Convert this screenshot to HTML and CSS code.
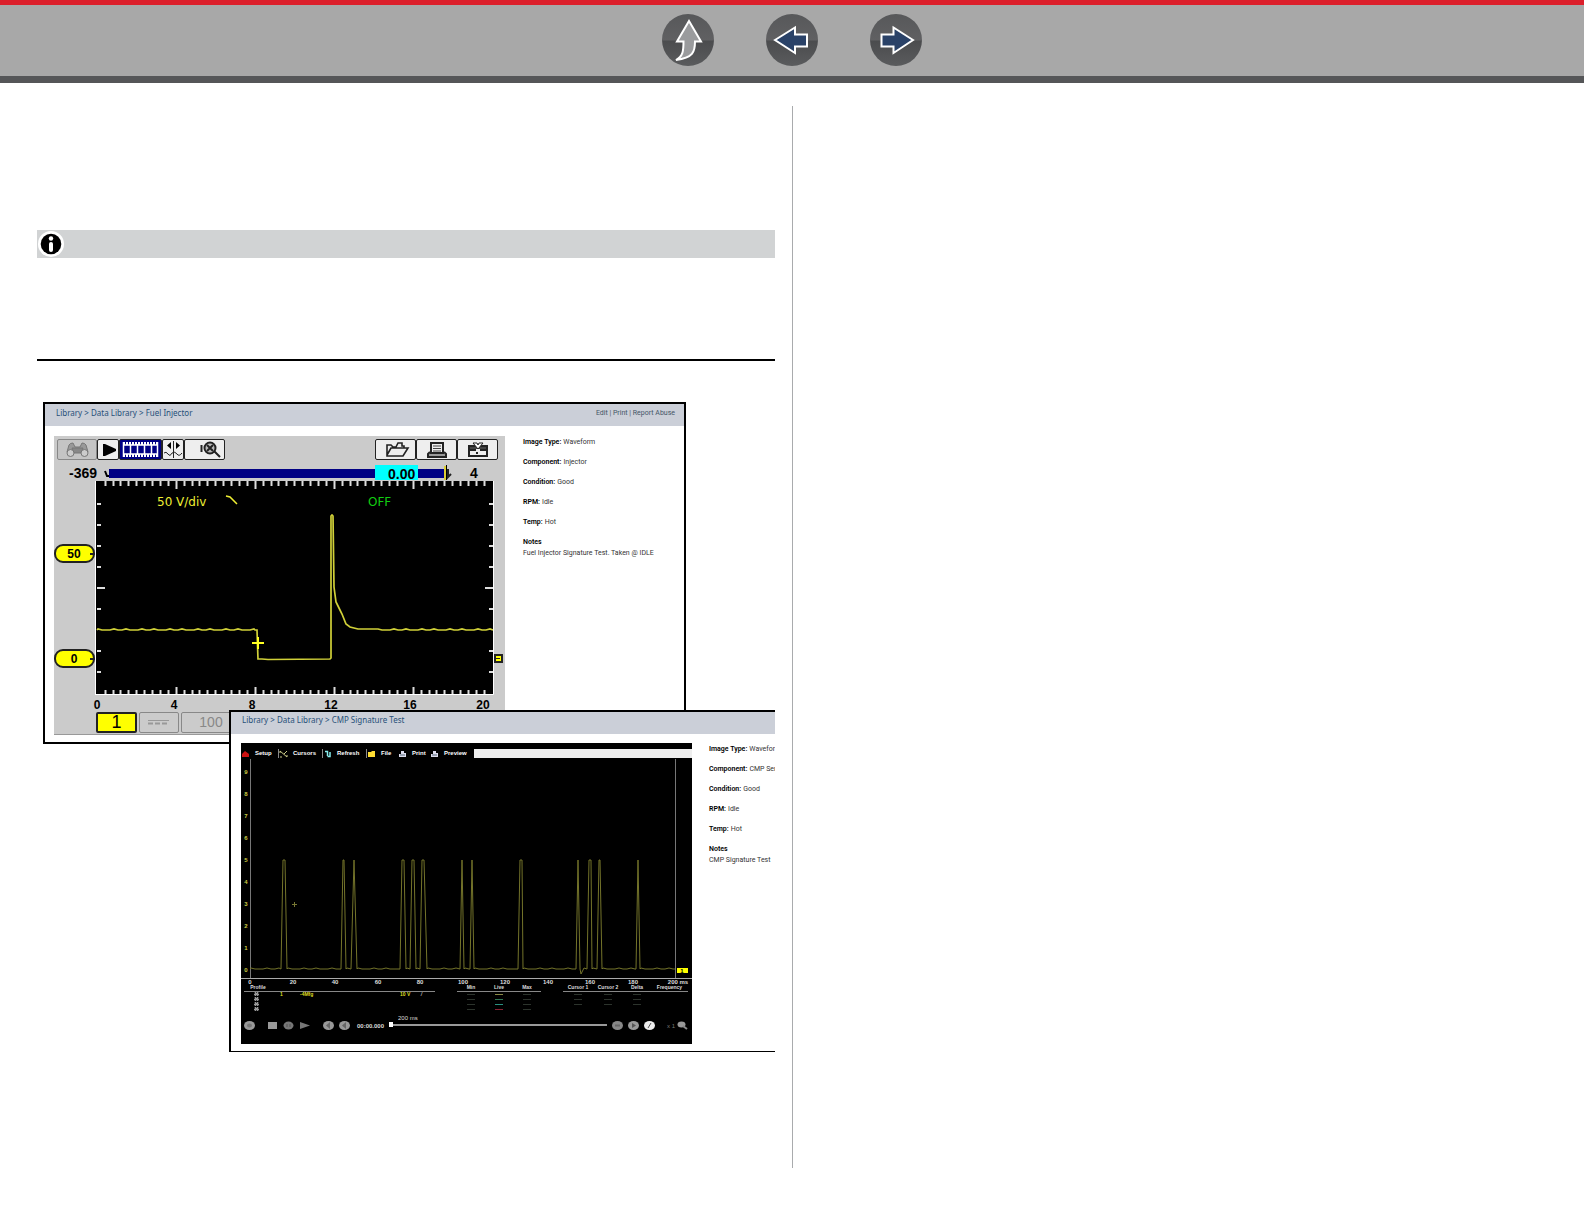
FILE: index.html
```html
<!DOCTYPE html>
<html lang="en">
<head>
<meta charset="utf-8">
<meta name="viewport" content="width=device-width, initial-scale=1">
<title>Data Library</title>
<link rel="stylesheet" href="styles.css">
</head>
<body>
<header class="topbar">
  <nav class="pager" aria-label="Document">
    <button class="round" type="button" aria-label="Back to contents">
      <svg viewBox="0 0 52 52"><path class="arrow-up" d="M27 7 39 27.500H33C33 38 31 44 14 46C21 42 21.500 37 21.500 27.500H15Z"/></svg>
    </button>
    <button class="round" type="button" aria-label="Previous page">
      <svg viewBox="0 0 52 52"><path class="arrow-side" d="M9 26 29 13.500V20.500H41V32.500H29V39Z"/></svg>
    </button>
    <button class="round" type="button" aria-label="Next page">
      <svg viewBox="0 0 52 52"><path class="arrow-side" d="M43 26 23.500 13.500V20.500H11.500V32.500H23.500V39Z"/></svg>
    </button>
  </nav>
</header>

<main class="page">
  <section class="column first">
    <div class="note">
      <div class="note-bar">
        <svg class="note-icon" viewBox="0 0 28 28" aria-label="Note"><circle cx="14" cy="14" r="13" fill="#fff"/><circle cx="14" cy="14" r="10.300"/><circle cx="14" cy="8.500" r="2.200" fill="#fff"/><rect x="12" y="12" width="4" height="10" rx="2" fill="#fff"/></svg>
      </div>
    </div>

    <div class="figure">
      <article class="window">
        <header class="window-bar">
          <span class="crumbs">Library &gt; Data Library &gt; Fuel Injector</span>
          <span class="actions"><a href="#edit">Edit</a> | <a href="#print">Print</a> | <a href="#report">Report Abuse</a></span>
        </header>
        <div class="window-body">
          <div class="scope">
            <div class="tools">
              <button class="tool wide off" type="button" aria-label="Find"><svg viewBox="0 0 38 19"><g fill="#999" stroke="#777"><path d="M11 5Q12 3 15 3L17 7H22L24 3Q27 3 28 5L30 12H9Z"/><path d="M14 8H25L23 13H16Z" fill="#888"/><circle cx="12.500" cy="13" r="3.500" fill="#ccc"/><circle cx="26.500" cy="13" r="3.500" fill="#ccc"/></g></svg></button>
              <button class="tool" type="button" aria-label="Play"><svg viewBox="0 0 20 19"><path d="M5 4H7L18 9V11L7 16H5Z"/></svg></button>
              <button class="tool film" type="button" aria-label="Frames"><svg viewBox="0 0 41 19"><path d="M3 3.500H38M3 15.500H38" stroke="#fff" stroke-width="3" stroke-dasharray="2 1"/><path d="M3.500 2V17M10.500 4V15M17.500 4V15M24.500 4V15M31.500 4V15M37.500 2V17M3 5H38M3 14H38" stroke="#fff" stroke-width="1.500" fill="none"/></svg></button>
              <button class="tool" type="button" aria-label="Cursor"><svg viewBox="0 0 20 19"><path d="M10.500 1V18M1 13Q3 11 5 14T9 13Q12 11 14 14T19 13" fill="none" stroke="#222"/><path d="M8 2V9L4 5.500ZM13 2V9L17 5.500Z"/></svg></button>
              <button class="tool wide" type="button" aria-label="Zoom"><svg viewBox="0 0 38 19"><path d="M15.500 5V12" stroke="#222" stroke-width="2"/><circle cx="24" cy="8" r="5.500" fill="#bbb" stroke="#222" stroke-width="2"/><path d="M21 5 27 11M27 5 21 11M28 11 34 17" stroke="#222" stroke-width="2"/></svg></button>
              <span class="push"></span>
              <button class="tool wide" type="button" aria-label="Open"><svg viewBox="0 0 38 19"><path d="M10 15V5H14L16 7H19L21 3H25V6H27V8M10 15 14 8H31L26 16H10Z" fill="none" stroke="#222" stroke-width="1.600"/></svg></button>
              <button class="tool wide" type="button" aria-label="Print"><svg viewBox="0 0 38 19"><path d="M13 3H25V13H13ZM12 12 10 14V17H28V14L26 12" fill="none" stroke="#222" stroke-width="2"/><path d="M15 6H23M15 8.500H23M15 11H23M11 15H27" stroke="#444"/></svg></button>
              <button class="tool wide" type="button" aria-label="Tools"><svg viewBox="0 0 38 19"><path d="M10 6H28V16H10ZM10 10H17M21 10H28" fill="none" stroke="#222" stroke-width="2"/><path d="M11 7H27V9H11Z" fill="#444"/><path d="M14 3 19 9 24 3 20 3 19 5 18 3Z" fill="#fff" stroke="#222"/><path d="M18 12V14" stroke="#222" stroke-width="2"/></svg></button>
            </div>
            <svg class="trace" id="trace-one" viewBox="54 461 451 250" role="img" aria-label="Fuel injector waveform"></svg>
            <div class="channels">
              <button class="channel on" type="button">1</button>
              <button class="channel" type="button" aria-label="Coupling"><svg viewBox="0 0 38 19"><path d="M8 7.500H29" stroke="#999"/><path d="M8 10.500H29" stroke="#999" stroke-dasharray="5 2" stroke-width="2"/></svg></button>
              <button class="channel range" type="button">100</button>
            </div>
          </div>
          <dl class="facts">
            <div><dt>Image Type:</dt><dd>Waveform</dd></div>
            <div><dt>Component:</dt><dd>Injector</dd></div>
            <div><dt>Condition:</dt><dd>Good</dd></div>
            <div><dt>RPM:</dt><dd>Idle</dd></div>
            <div><dt>Temp:</dt><dd>Hot</dd></div>
            <div class="notes"><dt>Notes</dt><dd>Fuel Injector Signature Test. Taken @ IDLE</dd></div>
          </dl>
        </div>
      </article>

      <article class="window front">
        <header class="window-bar">
          <span class="crumbs">Library &gt; Data Library &gt; CMP Signature Test</span>
        </header>
        <div class="window-body">
          <div class="lab">
            <div class="menu">
              <button type="button"><svg viewBox="0 0 9 8"><path d="M1 4 4 1 8 4V7H1Z" fill="#c11"/></svg>Setup</button>
              <button type="button" class="ruled"><svg viewBox="0 0 9 8"><path d="M1 1 8 7M8 1 5 4M1 7H3M1 1V3M8 5V7" stroke="#cc8" fill="none"/></svg>Cursors</button>
              <button type="button" class="ruled"><svg viewBox="0 0 9 8"><path d="M2 1.500H4.500V6M4.500 6.500H7V2" stroke="#8ee" stroke-width="1.500" fill="none"/></svg>Refresh</button>
              <button type="button" class="ruled small"><svg viewBox="0 0 9 8"><path d="M1 2H4L5 1H8V7H1Z" fill="#fd3"/></svg>File</button>
              <button type="button" class="small"><svg viewBox="0 0 9 8"><path d="M3 1H6V3H8V7H1V4H3Z" fill="#dde"/><path d="M2 5H7" stroke="#567"/></svg>Print</button>
              <button type="button"><svg viewBox="0 0 9 8"><path d="M3 1H6V3H8V7H1V4H3Z" fill="#dde"/><path d="M2 5H7" stroke="#567"/></svg>Preview</button>
              <span class="blank"></span>
            </div>
            <svg class="trace" id="trace-two" viewBox="241 759 451 225" role="img" aria-label="CMP signature waveform"></svg>
            <table class="readout">
              <colgroup><col class="c28"><col class="c28"><col class="c100"><col class="c35"><col class="c22"><col class="c28"><col class="c28"><col class="c28"><col class="c22"><col class="c30"><col class="c30"><col class="c28"><col></colgroup>
              <thead><tr><th>Profile</th><th></th><th></th><th></th><td></td><th>Min</th><th>Live</th><th>Max</th><td></td><th>Cursor 1</th><th>Cursor 2</th><th>Delta</th><th>Frequency</th></tr></thead>
              <tbody>
                <tr><td><i class="chip"></i></td><td class="lime left">1</td><td class="lime left">-4Mfg</td><td class="lime left">10 V <i class="slope">/</i></td><td></td><td><i class="dim"></i></td><td><i class="y"></i></td><td><i class="dim"></i></td><td></td><td><i class="dim"></i></td><td><i class="dim"></i></td><td><i class="dim"></i></td><td></td></tr>
                <tr><td><i class="chip"></i></td><td></td><td></td><td></td><td></td><td><i class="dim"></i></td><td><i class="g"></i></td><td><i class="dim"></i></td><td></td><td><i class="dim"></i></td><td><i class="dim"></i></td><td><i class="dim"></i></td><td></td></tr>
                <tr><td><i class="chip"></i></td><td></td><td></td><td></td><td></td><td><i class="dim"></i></td><td><i class="c"></i></td><td><i class="dim"></i></td><td></td><td><i class="dim"></i></td><td><i class="dim"></i></td><td><i class="dim"></i></td><td></td></tr>
                <tr><td><i class="chip"></i></td><td></td><td></td><td></td><td></td><td><i class="dim"></i></td><td><i class="r"></i></td><td><i class="dim"></i></td><td></td><td></td><td></td><td></td><td></td></tr>
              </tbody>
            </table>
            <div class="transport">
              <button type="button" aria-label="Record"><svg viewBox="0 0 11 9"><ellipse cx="5.500" cy="4.500" rx="5.500" ry="4.500" fill="#999"/><ellipse cx="5.500" cy="4.500" rx="2.500" ry="2" fill="#777"/></svg></button>
              <button class="stop" type="button" aria-label="Stop"><svg viewBox="0 0 11 9"><path d="M1 1H10V8H1Z" fill="#999"/></svg></button>
              <button type="button" aria-label="Pause"><svg viewBox="0 0 11 9"><ellipse cx="5.500" cy="4.500" rx="5" ry="4" fill="#777"/><path d="M4 3V6M7 3V6" stroke="#555"/></svg></button>
              <button type="button" aria-label="Play"><svg viewBox="0 0 11 9"><path d="M1 1 11 4.500 1 8Z" fill="#777"/></svg></button>
              <button class="back" type="button" aria-label="Step back"><svg viewBox="0 0 11 9"><ellipse cx="5.500" cy="4.500" rx="5.500" ry="4.500" fill="#999"/><path d="M7 1V8L3 4.500Z" fill="#666"/></svg></button>
              <button type="button" aria-label="Step forward"><svg viewBox="0 0 11 9"><ellipse cx="5.500" cy="4.500" rx="5.500" ry="4.500" fill="#999"/><path d="M7 1V8L3 4.500Z" fill="#666"/></svg></button>
              <output class="clock">00:00.000</output>
              <label class="seek"><span>200 ms</span><input type="range" min="0" max="200" value="0"></label>
              <button type="button" aria-label="Mark"><svg viewBox="0 0 11 9"><ellipse cx="5.500" cy="4.500" rx="5.500" ry="4.500" fill="#888"/><path d="M3 4.500H8" stroke="#666" stroke-width="2"/></svg></button>
              <button type="button" aria-label="Next mark"><svg viewBox="0 0 11 9"><ellipse cx="5.500" cy="4.500" rx="5.500" ry="4.500" fill="#999"/><path d="M4 2V7L8 4.500Z" fill="#555"/></svg></button>
              <button type="button" aria-label="Edit mark"><svg viewBox="0 0 11 9"><ellipse cx="5.500" cy="4.500" rx="5.500" ry="4.500" fill="#eee"/><path d="M4 7 7 2" stroke="#555"/></svg></button>
              <span class="scale">x 1</span>
              <button class="lens" type="button" aria-label="Zoom"><svg viewBox="0 0 11 9"><ellipse cx="4.500" cy="3.500" rx="4" ry="3" fill="#999"/><path d="M6 5 10 8" stroke="#888" stroke-width="2"/></svg></button>
            </div>
          </div>
          <dl class="facts">
            <div><dt>Image Type:</dt><dd>Wavefor</dd></div>
            <div><dt>Component:</dt><dd>CMP Ser</dd></div>
            <div><dt>Condition:</dt><dd>Good</dd></div>
            <div><dt>RPM:</dt><dd>Idle</dd></div>
            <div><dt>Temp:</dt><dd>Hot</dd></div>
            <div class="notes"><dt>Notes</dt><dd>CMP Signature Test</dd></div>
          </dl>
        </div>
      </article>
    </div>
  </section>
  <section class="column second"></section>
</main>
<script src="traces.js"></script>
</body>
</html>
```
FILE: styles.css
```css
* { box-sizing: border-box; }
body { margin: 0; background: #fff; font-family: "Open Sans", "Noto Sans", sans-serif; color: #222; }
button { margin: 0; padding: 0; border: 0; background: none; font: inherit; color: inherit; cursor: pointer; }
svg { display: block; }

.topbar { height: 83px; border-top: 5px solid #dc1f2b; border-bottom: 7px solid #555658; background: #a8a8a8; }
.pager { display: flex; justify-content: center; gap: 52px; padding-top: 9px; }
.round { width: 52px; height: 52px; border-radius: 50%; background: linear-gradient(#57585a, #606062 50%, #4b4c4e 52%, #5a5b5d); }
.arrow-up { fill: #9a9b9d; stroke: #fff; stroke-width: 2; }
.arrow-side { fill: #2a4268; stroke: #fff; stroke-width: 2; }

.page { display: grid; grid-template-columns: 1fr 1fr; min-height: calc(100vh - 83px); padding: 23px 0 56px; }
.first { min-width: 0; padding: 124px 17px 0 37px; }
.second { border-left: 1px solid #a9abad; }
.note { height: 131px; border-bottom: 2px solid #000; }
.note-bar { background: #d1d3d4; }
.note-icon { width: 28px; height: 28px; }

.figure { position: relative; height: 650px; margin-top: 41px; overflow: hidden; }
.window { width: 643px; margin-left: 6px; border: 2px solid #000; background: #fff; }
.window.front { position: absolute; left: 192px; top: 308px; margin: 0; border-bottom-width: 1px; }
.window-bar { display: flex; justify-content: space-between; height: 22px; padding: 0 9px 0 11px; background: #cbcfd8; line-height: 18px; }
.crumbs { font-family: "Noto Sans", sans-serif; font-size: 8px; color: #274f78; }
.front .crumbs { line-height: 16px; }
.actions { font-family: Roboto, sans-serif; font-size: 7px; color: #456; }
.actions a { color: inherit; text-decoration: none; }
.window-body { display: flex; gap: 18px; padding: 10px 0 7px 9px; }
.front .window-body { gap: 17px; padding: 9px 0 7px 10px; }
.facts { margin: 0; padding-top: 1px; font-family: Roboto, sans-serif; font-size: 7px; line-height: 11px; color: #333; white-space: nowrap; }
.facts div { display: flex; gap: 2px; height: 20px; }
.facts dt { font-weight: 600; color: #000; }
.facts dd { margin: 0; }
.facts .notes { display: block; }

.scope { flex: none; width: 451px; height: 299px; padding-top: 3px; background: #cbcbcb; border-bottom: 1px solid #999; }
.tools { display: flex; padding: 0 7px 0 3px; height: 22px; }
.tool { width: 22px; height: 21px; border: 1px solid #222; border-radius: 2px; background: #eee; }
.tool svg { height: 19px; margin: auto; }
.tool.wide { width: 41px; }
.tool.wide.off { width: 40px; border-color: #888; background: #c4c4c4; }
.tool.film { width: 43px; background: #000084; }
.push { flex: 1; }
.trace { width: 451px; }
.channels { display: flex; gap: 2px; padding: 1px 0 0 42px; }
.channel { width: 40px; height: 21px; border: 1px solid #888; border-radius: 2px; color: #888; font-family: "Liberation Sans", sans-serif; font-size: 14px; line-height: 19px; }
.channel.on { width: 41px; border: 2px solid #222; background: #ff0; color: #000; font-size: 18px; line-height: 17px; }
.channel.range { width: 60px; }

.lab { flex: none; width: 451px; height: 301px; padding-top: 6px; background: #000; font-family: "Liberation Sans", sans-serif; font-size: 6px; color: #ddd; }
.menu { display: flex; height: 10px; }
.menu button { display: flex; align-items: center; gap: 5px; width: 44px; height: 9px; font-weight: 700; line-height: 9px; color: #fff; }
.menu button:first-child { width: 37px; }
.menu .small { width: 32px; }
.menu .ruled { border-left: 1px solid #888; }
.menu svg { width: 9px; height: 8px; }
.blank { flex: 1; height: 9px; background: #eee; }
.readout { width: 444px; margin-left: 3px; table-layout: fixed; border-collapse: collapse; font-size: 5px; line-height: 5px; }
.readout th, .readout td { height: 5px; padding: 0; text-align: center; white-space: nowrap; }
.readout th { height: 7px; border-bottom: 1px solid #888; font-weight: 700; }
.readout .left { text-align: left; }
.readout .lime { color: #dd2; font-weight: 700; }
.readout .left:nth-child(2) { padding-left: 8px; }
.slope { color: #bbb; margin-left: 9px; }
.readout td i:not(.slope) { display: block; width: 8px; height: 1px; margin: 0 auto; }
.readout td .chip:not(.slope) { width: 5px; height: 4px; margin: 0 0 0 10px; background: #999; border: 1px dotted #333; }
.dim { background: #2c332c; }
.y { background: #884; }
.g { background: #375; }
.c { background: #2a9080; }
.r { background: #823; }
.c22 { width: 22px; } .c28 { width: 28px; } .c30 { width: 30px; } .c35 { width: 35px; } .c100 { width: 100px; }
.transport { display: flex; align-items: center; gap: 5px; height: 22px; padding: 6px 4px 0 3px; }
.transport button { width: 11px; height: 9px; }
.transport svg { width: 11px; height: 9px; }
.transport .stop { margin-left: 7px; }
.transport .back { margin-left: 8px; }
.clock { margin-left: 2px; font-size: 6px; font-weight: 700; }
.seek { flex: 1; display: flex; flex-direction: column; height: 22px; line-height: 7px; }
.seek span { padding-left: 9px; }
.seek input { -webkit-appearance: none; appearance: none; width: 100%; height: 6px; margin: 0; background: linear-gradient(#999, #999) center / 100% 2px no-repeat; }
.seek input::-webkit-slider-thumb { -webkit-appearance: none; width: 4px; height: 5px; background: #fff; }
.scale { width: 15px; text-align: right; color: #777; }
.transport .lens { margin-left: -3px; }

.trace text { font-family: "Liberation Sans", sans-serif; }
.axis { font-size: 12px; font-weight: 700; text-anchor: middle; }
.reading { font-size: 14px; font-weight: 700; }
.trace .inset { font-family: "DejaVu Sans", sans-serif; font-size: 12px; }
.tiny { font-size: 6px; font-weight: 700; text-anchor: middle; }
```
FILE: traces.js
```js
// Draws both oscilloscope traces; coordinates share one sheet grid.
function ticks(from, step, count, draw) {
  let d = "";
  for (let i = 0; i <= count; i++) d += draw(Math.round(from + i * step), i);
  return d;
}

// A resting level with the small jitter of a sampled signal.
function rest(x1, x2, y) {
  let d = "";
  for (let x = x1, i = 0; x < x2; x += 4, i++) d += `L${x} ${y - ((i * i + i * 3) % 7 < 2 ? 1 : 0)}`;
  return d + `L${x2} ${y}`;
}

const topTicks = ticks(96.7, 7.9, 49, (x, i) => i ? `M${x}.500 481V${i % 10 ? 486 : 489}` : "");
const lowTicks = ticks(96.7, 7.9, 49, (x, i) => i ? `M${x}.500 694V${i % 10 ? 690 : 687}` : "");
const sideTicks = ticks(504, 21, 8, (y, i) => {
  const n = i === 4 ? 8 : 4;
  return y === 630 ? "" : `M97 ${y}h${n}M493 ${y}h-${n}`;
});
const wave = `M97 630${rest(98, 255, 630)}L257 630L258 659H262L268 659.500L330 659L331 658V516L332 515L333 516L334 587L336 602L339 608L342 614L346 624L350 627L358 629H377${rest(378, 493, 630)}`;

const pill = (y, label) => `<rect x="55" y="${y - 8}" width="39" height="17" rx="8" fill="#ff0" stroke="#222" stroke-width="2"/><path d="M90 ${y + 1}H95" stroke="#222" stroke-width="2"/><text class="axis" x="74" y="${y + 5}">${label}</text>`;

document.getElementById("trace-one").innerHTML = `
  <text class="reading" x="69" y="478">-369</text>
  <path d="M105 471L107 476H110" fill="none" stroke="#000" stroke-width="2"/>
  <rect x="109" y="469" width="338" height="9" fill="#000084"/>
  <rect x="375" y="465" width="43" height="15" fill="#0ff"/>
  <text class="reading" x="388" y="479">0.00</text>
  <path d="M448 469V477L451 474" fill="none" stroke="#222" stroke-width="2"/>
  <path d="M445 466V480" stroke="#dc3" stroke-width="2"/><path d="M446.500 465V480" stroke="#000"/>
  <text class="reading" x="470" y="478">4</text>
  <rect x="96" y="481" width="397" height="213"/>
  <path d="M96 694.500H493.500V481M95.500 481V695" fill="none" stroke="#fff"/>
  <path d="${topTicks}${lowTicks}${sideTicks}" stroke="#ddd" stroke-width="2"/>
  <text class="inset" x="157" y="506" fill="#ee3">50 V/div</text>
  <path d="M226 496L230 497L237 504" fill="none" stroke="#ee3" stroke-width="1.500"/>
  <text class="inset" x="368" y="506" fill="#1c1">OFF</text>
  <path d="${wave}" fill="none" stroke="#d0d038" stroke-width="1.700"/>
  <path d="M252 643H264M258 637V649" stroke="#ff2" stroke-width="2"/>
  ${pill(553, "50")}${pill(658, "0")}
  <rect x="495" y="655" width="7" height="7" fill="#ff0" stroke="#222" stroke-width="2"/><path d="M496 658.500H500" stroke="#222"/>
  ${[[97, 0], [174, 4], [252, 8], [331, 12], [410, 16], [483, 20]].map(([x, n]) => `<text class="axis" x="${x}" y="709">${n}</text>`).join("")}`;

const pulses = [[281, 283, 285, 287], [341, 343, 344, 346], [351, 354, 354, 357], [400, 402, 404, 406],
  [410, 412, 414, 416], [420, 422, 424, 427], [460, 462, 462, 464], [470, 472, 472, 474],
  [518, 520, 522, 523], [576, 578, 578, 580], [587, 589, 591, 592], [597, 599, 600, 602], [636, 638, 638, 640]];
let signal = "M250 968.500", at = 250;
for (const [a, b, c, d] of pulses) {
  signal += rest(at + 1, a, 969) + `L${b} 860L${c} 860L${d} 969`;
  if (d === 580) signal += "L581 974L583 970";
  at = d === 580 ? 583 : d;
}
signal += rest(at + 1, 675, 969);

let labels = "";
for (let i = 0; i < 10; i++) labels += `<text class="tiny" x="246" y="${972 - i * 22}" fill="#cc4">${i}</text>`;
for (let i = 0; i < 11; i++) labels += `<text class="tiny" x="${Math.round(250 + i * 42.5) + (i === 10 ? 3 : 0)}" y="984" fill="#ddd">${i * 20}${i === 10 ? " ms" : ""}</text>`;

document.getElementById("trace-two").innerHTML = `
  <path d="M250.500 759V978M675.500 759V978" stroke="#777"/>
  <path d="M241 978.500H692" stroke="#aaa"/>
  <path d="${signal}" fill="none" stroke="#74742a"/>
  <path d="M292 904.500H297M294.500 902V907" stroke="#773"/>
  <rect x="677" y="968" width="11" height="5" fill="#ff0"/>
  <text class="tiny" x="682" y="973">1</text>${labels}`;
```
